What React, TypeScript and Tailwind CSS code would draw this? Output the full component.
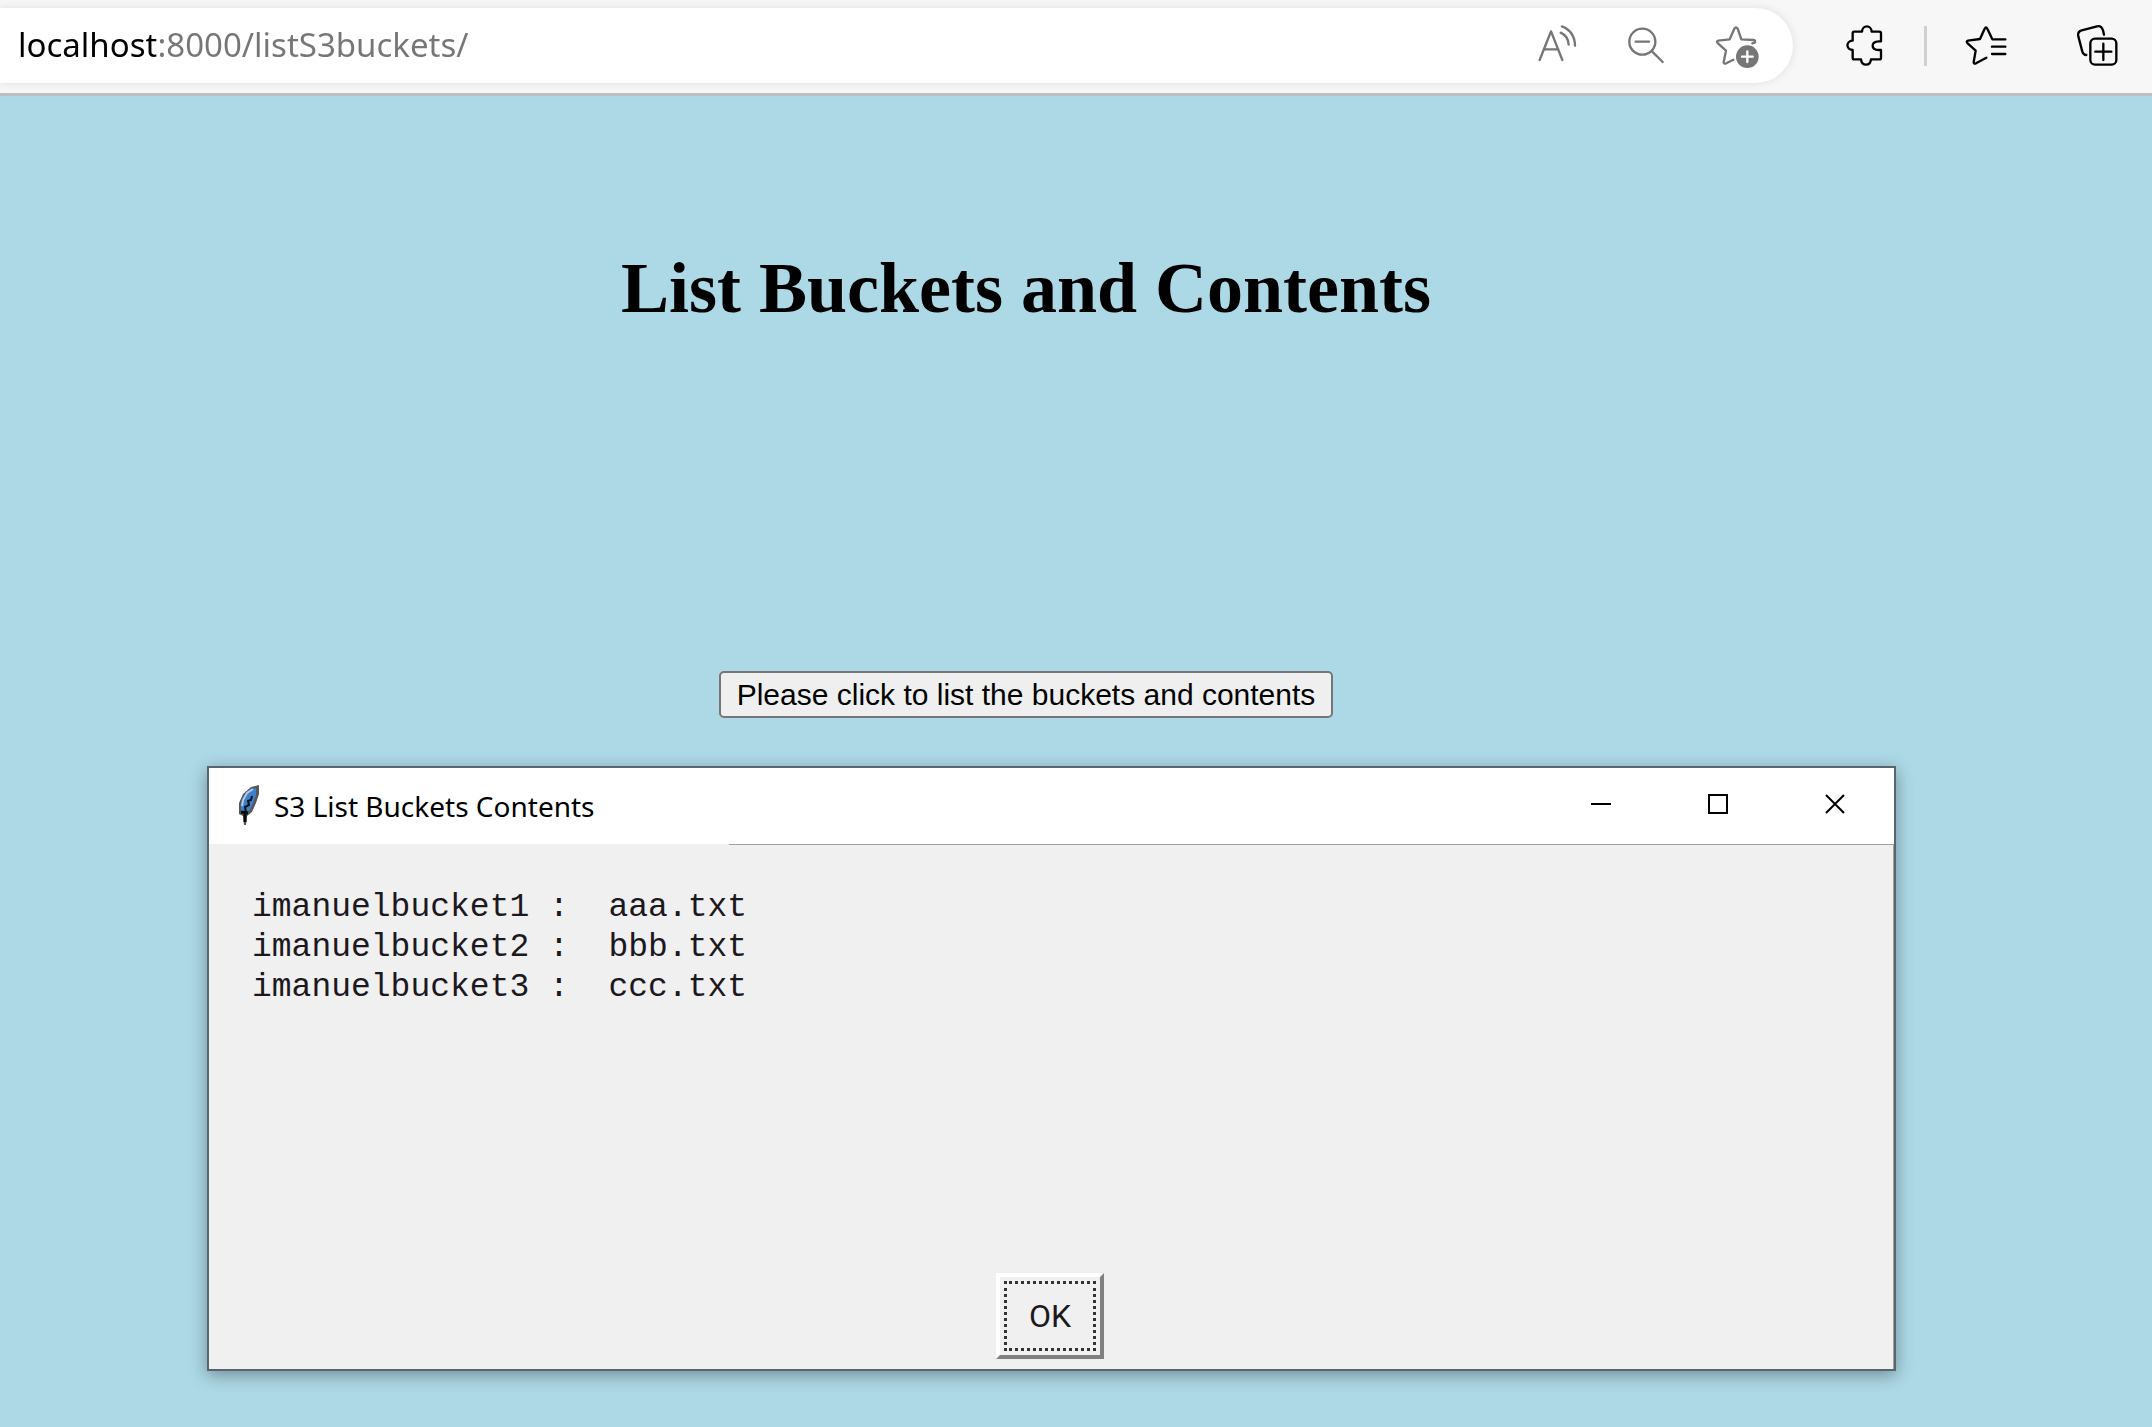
import { useState } from "react";
import type { ReactNode } from "react";

type IconProps = { viewBox: string; children: ReactNode };

function ToolbarIcon({ viewBox, children }: IconProps) {
  return (
    <svg
      viewBox={viewBox}
      className="h-[75px] w-[60px]"
      fill="none"
      stroke="currentColor"
      strokeWidth={7}
      strokeLinecap="round"
      strokeLinejoin="round"
      aria-hidden="true"
    >
      {children}
    </svg>
  );
}

function ReadAloudIcon() {
  return (
    <ToolbarIcon viewBox="81 24 180 225">
      <path d="M119 180 L153 94 L187 180 M131 148 H175" />
      <path d="M182 98 Q205 109 206 134 M186 79 Q224 94 225 137" />
    </ToolbarIcon>
  );
}

function ZoomOutIcon() {
  return (
    <ToolbarIcon viewBox="351 24 180 225">
      <circle cx="427" cy="125" r="39" />
      <path d="M407 125 H447 M456 154 L488 186" />
    </ToolbarIcon>
  );
}

function AddFavoriteIcon() {
  return (
    <ToolbarIcon viewBox="621 24 180 225">
      <path d="M757 130 L765 127 Q767 121 761 120 L724 118 L713 86 Q708 79 703 86 L689 118 L655 122 Q647 124 654 130 L678 152 L671 186 Q671 193 679 190 L700 179" />
      <circle cx="742" cy="170" r="34" fill="currentColor" stroke="none" />
      <path d="M742 154 V186 M726 170 H758" stroke="#fff" />
    </ToolbarIcon>
  );
}

function ExtensionsIcon() {
  return (
    <ToolbarIcon viewBox="42 24 180 225">
      <path d="M103 95 H126 C127 74 154 74 155 95 H178 Q183 95 183 100 V124 H176 C152 125 152 149 176 150 H183 V173 Q183 178 178 178 H153 C151 199 125 199 123 178 H103 Q98 178 98 173 V150 C77 149 77 123 98 122 V100 Q98 95 103 95 Z" />
    </ToolbarIcon>
  );
}

function FavoritesIcon() {
  return (
    <ToolbarIcon viewBox="411 24 180 225">
      <path d="M556 118 H517 L502 86 Q498 78 494 86 L480 117 L444 122 Q437 124 443 130 L467 152 L461 186 Q461 193 468 190 L499 173" />
      <path d="M516 140 H556 M516 162 H556" />
    </ToolbarIcon>
  );
}

function CollectionsIcon() {
  return (
    <ToolbarIcon viewBox="738 24 180 225">
      <path d="M849 104 L846 91 Q841 76 828 79 L782 91 Q768 95 772 109 L784 155 Q787 165 796 165" />
      <rect x="808" y="116" width="78" height="78" rx="14" />
      <path d="M847 131 V180 M823 155 H871" />
    </ToolbarIcon>
  );
}

function FeatherIcon() {
  return (
    <svg viewBox="0 0 22 40" className="h-10 w-[22px]" aria-hidden="true">
      <path d="M13 2 L21 0 L21 9 L18 18 L14 27 L9 31 L8 40 L6 40 L5 31 L1 29 L1 18 L5 9 Z" fill="#55585c" />
      <path d="M14 4 L18 3 L18 10 L15 18 L12 25 L8 28 L3 26 L3 19 L6 11 Z" fill="#3f7fca" />
      <path d="M15 4 L9 8 L5 15 L4 21" fill="none" stroke="#a9cdf0" strokeWidth="2" />
      <path d="M14 11 L13 15 L10 16 L11 20 L7 22 L8 27 L6 29" fill="none" stroke="#0b1018" strokeWidth="2" />
      <path d="M3 27 L10 28 M7 27 V37" fill="none" stroke="#0b0c0e" strokeWidth="3" />
    </svg>
  );
}

function ToolbarButton({ label, children }: { label: string; children: ReactNode }) {
  return (
    <button type="button" aria-label={label} className="block shrink-0 self-start">
      {children}
    </button>
  );
}

function BrowserBar() {
  const [url, setUrl] = useState("localhost:8000/listS3buckets/");
  return (
    <header className="flex h-24 gap-[30px] border-b-3 border-[#bfbfbf] bg-[#f7f7f7] pt-2 pr-[25px] text-black">
      <div className="mr-[11px] flex h-[75px] min-w-0 flex-1 gap-[30px] rounded-r-full bg-white pr-[26px] text-[#767676] shadow-[0_0_10px_rgba(0,0,0,0.1)]">
        <input
          aria-label="Address"
          value={url}
          spellCheck={false}
          onChange={(e) => setUrl(e.target.value)}
          className="h-[73px] min-w-0 flex-1 bg-linear-to-r from-black from-[156px] to-[#767676] to-[156px] bg-clip-text pl-[18px] font-['Noto_Sans',sans-serif] text-[33px] text-transparent outline-none"
        />
        <ToolbarButton label="Read aloud"><ReadAloudIcon /></ToolbarButton>
        <ToolbarButton label="Zoom out"><ZoomOutIcon /></ToolbarButton>
        <ToolbarButton label="Add to favorites"><AddFavoriteIcon /></ToolbarButton>
      </div>
      <ToolbarButton label="Extensions"><ExtensionsIcon /></ToolbarButton>
      <div className="mt-[18px] h-10 w-[3px] bg-[#d0d0d0]" />
      <ToolbarButton label="Favorites"><FavoritesIcon /></ToolbarButton>
      <div className="ml-5">
        <ToolbarButton label="Collections"><CollectionsIcon /></ToolbarButton>
      </div>
    </header>
  );
}

function CaptionButton({ label, path }: { label: string; path: string }) {
  return (
    <button type="button" aria-label={label} className="flex h-[72px] w-[117px] items-center justify-center">
      <svg viewBox="0 0 20 20" className="size-5" fill="none" stroke="#000" strokeWidth="2" aria-hidden="true">
        <path d={path} />
      </svg>
    </button>
  );
}

const buckets = [
  { name: "imanuelbucket1", file: "aaa.txt" },
  { name: "imanuelbucket2", file: "bbb.txt" },
  { name: "imanuelbucket3", file: "ccc.txt" },
];

function BucketsWindow() {
  return (
    <section
      role="dialog"
      aria-labelledby="window-title"
      className="mt-12 mr-[256px] ml-[207px] border-2 border-[#56666d] bg-[#f0f0f0] shadow-[0_4px_16px_rgba(0,0,0,0.35)]"
    >
      <div className="flex h-[76px] bg-white pr-px pl-[29px]">
        <div className="mt-[17px]">
          <FeatherIcon />
        </div>
        <h2
          id="window-title"
          className="ml-3.5 flex-1 font-['Noto_Sans',sans-serif] text-[28px] leading-[76px] text-black"
        >
          S3 List Buckets Contents
        </h2>
        <CaptionButton label="Minimize" path="M0 10 H20" />
        <CaptionButton label="Maximize" path="M1 1 H19 V19 H1 Z" />
        <CaptionButton label="Close" path="M1 1 L19 19 M19 1 L1 19" />
      </div>
      <div className="ml-[520px] h-px bg-[#a0a0a0]" />
      <div className="flex min-h-[524px] flex-col justify-between border-r border-[#a0a0a0] pt-[43px] pb-2.5">
        <ul className="pl-[43px] font-['Liberation_Mono',monospace] text-[33px] leading-10 whitespace-pre text-[#1c1820]">
          {buckets.map((b) => (
            <li key={b.name}>{`${b.name} :  ${b.file}`}</li>
          ))}
        </ul>
        <button
          type="button"
          className="mr-0.5 h-[86px] w-[108px] self-center border-4 border-t-white border-r-[#808080] border-b-[#808080] border-l-white p-1"
        >
          <span className="flex h-full items-center justify-center border-3 border-dotted border-[#333] font-['Roboto',sans-serif] text-[32px] text-[#1c1820]">
            OK
          </span>
        </button>
      </div>
    </section>
  );
}

export default function App() {
  return (
    <div className="min-h-screen bg-[#add8e6]">
      <BrowserBar />
      <main className="pb-14">
        <div className="flex flex-col items-center pt-[152px] pr-[100px]">
          <h1 className="font-['Liberation_Serif',serif] text-[72px] leading-20 font-bold text-black">
            List Buckets and Contents
          </h1>
          <button
            type="button"
            className="mt-[343px] h-[47px] rounded-[5px] border-2 border-[#767676] bg-[#efefef] px-4 font-['Liberation_Sans',sans-serif] text-[30px] leading-10 text-black"
          >
            Please click to list the buckets and contents
          </button>
        </div>
        <BucketsWindow />
      </main>
    </div>
  );
}
